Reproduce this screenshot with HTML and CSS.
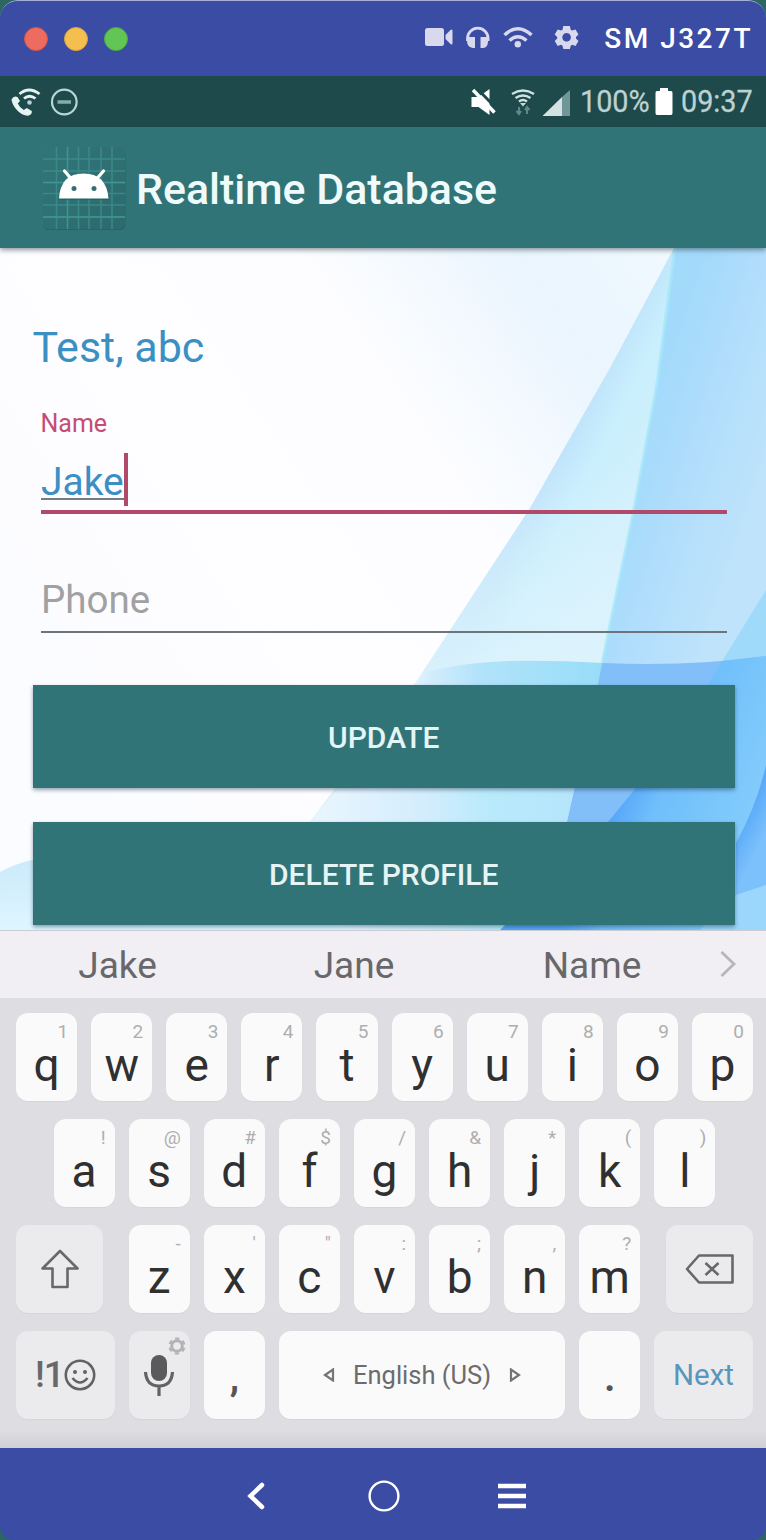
FILE: index.html
```html
<!DOCTYPE html>
<html lang="en">
<head>
<meta charset="utf-8">
<title>Realtime Database</title>
<link rel="stylesheet" href="styles.css">
</head>
<body>
<div class="window">
  <header class="titlebar">
    <div class="lights"><i class="light red"></i><i class="light yellow"></i><i class="light green"></i></div>
    <svg class="tools" width="160" height="30" viewBox="420 22 160 30">
      <g fill="#d8d9ec">
        <rect x="425" y="28" width="19" height="18" rx="2.5"/>
        <path d="M445.500 35L450.500 30Q452.500 28.500 452.500 31V43Q452.500 45.500 450.500 44L445.500 39Z"/>
        <path d="M480.500 37h7.500v4q0 7-5 7h-2.500zM475 48h-2q-6-1-6-7v-4h8z"/>
        <circle cx="517.800" cy="44.300" r="3.200"/>
        <path fill-rule="evenodd" d="M563.300 26h6.600l.8 3.700 1.500.9 3.300-1.200 3 5-2.500 2.500v1.600l2.500 2.500-3 5-3.300-1.200-1.500.9-.8 3.200h-6.600l-.8-3.200-1.500-.9-3.300 1.200-3-5 2.500-2.500v-1.600l-2.500-2.500 3-5 3.300 1.200 1.500-.9zM566.600 33a4.300 4.300 0 1 0 .01 0z"/>
      </g>
      <g fill="none" stroke="#d8d9ec" stroke-width="2.800">
        <path d="M467.500 41v-2.500a10.300 10.300 0 0 1 20.600 0v2.500"/>
        <path d="M504.500 35q13.300-12.500 27 0M509.500 40.500q8.300-7.500 17 0" stroke-width="3.500"/>
      </g>
    </svg>
    <span class="device">SM J327T</span>
  </header>

  <div class="status">
    <svg class="calls" width="80" height="34" viewBox="5 84 80 34">
      <path fill="#e6f3f3" d="M11.500 98.500q2-4 6-2.500l2.500 4-2.200 2.500q2 4.500 6 6.500l3-2 5 3q.5 3-3 4.500-5 1-11-4.500-5.800-6-6.300-11.500z"/>
      <g fill="none" stroke="#e6f3f3" stroke-width="2.800"><path d="M19.500 93q9.500-8 20 0M24 97.500q5.500-4.500 11.500 0"/></g>
      <circle cx="29.500" cy="101.500" r="2.300" fill="#b8d3d3"/>
      <circle cx="64.300" cy="101" r="12.300" fill="none" stroke="#b9d6d6" stroke-width="2.200"/>
      <path d="M57.500 101h13.500" stroke="#87acac" stroke-width="3.500"/>
    </svg>
    <div class="status-right">
      <svg width="104" height="34" viewBox="470 84 104 34">
        <path fill="#fff" d="M472.500 96h7l11-8v26l-11-8h-7z"/>
        <path d="M477 86.500l22 22.500" stroke="#1f4a4b" stroke-width="3"/>
        <path d="M474 89l21.500 22.500" stroke="#fff" stroke-width="3.500"/>
        <g fill="none" stroke="#cfe2e2" stroke-width="2.300"><path d="M513 93q11-7 22 0M516.500 97q7.500-5 15 0M520 100.500q4-3 8 0"/></g>
        <path fill="#c4dada" d="M521 102h6l-3 3.500z"/>
        <path d="M520 106v7m-2.500-3l2.500 3 2-3M528 113v-7m-2 3l2-3 2.500 3" stroke="#5f8889" fill="none" stroke-width="2"/>
        <path fill="#d4e3e2" d="M543.500 115L563 96v19z"/><path fill="#6f9798" d="M563 96l8-7v26h-8z"/>
      </svg>
      <span class="pct">100%</span>
      <svg class="battery" width="18" height="27" viewBox="0 0 18 27"><path fill="#fff" d="M5 0h8v3h3q1.500 0 1.500 2v20q0 2-1.500 2H2q-1.500 0-1.500-2V5q0-2 1.500-2h3z"/></svg>
      <span class="clock">09:37</span>
    </div>
  </div>

  <div class="appbar">
    <svg class="launcher" width="84" height="84" viewBox="42 146 84 84">
      <defs><linearGradient id="tile" x2="1" y2="1"><stop offset="0" stop-color="#317679"/><stop offset="1" stop-color="#2d6b6e"/></linearGradient></defs>
      <rect x="43.500" y="148.500" width="82" height="82" rx="6" fill="#235c5f" opacity=".6"/>
      <rect x="43" y="147" width="82" height="82" rx="6" fill="url(#tile)"/>
      <path d="M56.500 147v82M78.500 147v82M89 147v82M101 147v82M112 147v82M43 159h82M43 171h82M43 182.500h82M43 193.500h82M43 205h82M43 217h82" stroke="#3f9091" stroke-width="1.600" opacity=".75"/>
      <path d="M67.500 147v82M43 182.500h82M43 217h82" stroke="#409494" stroke-width="1.500"/>
      <path fill="#205457" opacity=".5" d="M59 200q1-25 25-25t25 25z"/>
      <path d="M64.500 171l7 8M103.500 171l-7 8" stroke="#fff" stroke-width="3.200" stroke-linecap="round"/>
      <path fill="#fff" d="M59 198.500q1.500-25 24.500-25t25 25z"/>
      <circle cx="74" cy="188.500" r="2.500" fill="#376d70"/><circle cx="94" cy="188.500" r="2.500" fill="#376d70"/>
    </svg>
    <h1>Realtime Database</h1>
  </div>

  <main class="content">
    <svg class="art" viewBox="0 248 766 682" preserveAspectRatio="none">
      <defs>
        <linearGradient id="base" x1="0" y1=".6" x2="1" y2="0"><stop offset="0" stop-color="#fbfcff"/><stop offset=".3" stop-color="#fefdff"/><stop offset=".55" stop-color="#fdfdff"/><stop offset=".76" stop-color="#eaf5fe"/><stop offset=".9" stop-color="#f0f9fe"/></linearGradient>
        <linearGradient id="fold" gradientUnits="userSpaceOnUse" x1="535" y1="500" x2="625" y2="545"><stop offset="0" stop-color="#bfe3fa"/><stop offset=".35" stop-color="#c9effd"/><stop offset="1" stop-color="#d3f0fc"/></linearGradient>
        <linearGradient id="fade" x2="0" y2="1"><stop offset=".3" stop-color="#dff4fd" stop-opacity="0"/><stop offset=".62" stop-color="#dff4fd" stop-opacity=".8"/></linearGradient>
        <linearGradient id="band" gradientUnits="userSpaceOnUse" x1="640" y1="440" x2="760" y2="480"><stop offset="0" stop-color="#a3dafb"/><stop offset=".5" stop-color="#b2defc"/><stop offset="1" stop-color="#bee3fb"/></linearGradient>
        <linearGradient id="wave" gradientUnits="userSpaceOnUse" x1="400" y1="0" x2="600" y2="0"><stop offset="0" stop-color="#f4f9fe"/><stop offset=".15" stop-color="#d3edfc"/><stop offset=".4" stop-color="#b1e3fa"/><stop offset="1" stop-color="#98ddf8"/></linearGradient>
        <linearGradient id="low" gradientUnits="userSpaceOnUse" x1="320" y1="0" x2="580" y2="0"><stop offset="0" stop-color="#e9f5fe"/><stop offset=".4" stop-color="#d3edfd"/><stop offset=".65" stop-color="#b9eafb"/><stop offset="1" stop-color="#b5e5fb"/></linearGradient>
        <linearGradient id="deep" gradientUnits="userSpaceOnUse" x1="620" y1="790" x2="740" y2="840"><stop offset="0" stop-color="#55a5fa"/><stop offset=".3" stop-color="#70bffb"/><stop offset="1" stop-color="#82cbfb"/></linearGradient>
        <linearGradient id="edge" gradientUnits="userSpaceOnUse" x1="738" y1="820" x2="766" y2="835"><stop offset="0" stop-color="#55a6f8"/><stop offset="1" stop-color="#7cc1fc"/></linearGradient>
        <linearGradient id="corner" x2=".2" y2="1"><stop offset="0" stop-color="#cbeafb"/><stop offset="1" stop-color="#dff6ff"/></linearGradient>
      </defs>
      <path fill="url(#base)" d="M0 248h766v682H0z"/>
      <path fill="url(#fold)" d="M674 248L610 368 530 508 415 684 310 822 250 930H545L567 822 598 684 635 505 657 385 675 248z"/>
      <path fill="url(#fade)" d="M674 248L610 368 530 508 415 684 310 822 250 930H545L567 822 598 684 635 505 657 385 675 248z"/>
      <path fill="url(#band)" d="M675 248H766V930H545L567 822 598 684 635 505 657 385z"/>
      <path d="M675 248L657 385 635 505 598 684" fill="none" stroke="#a2e5fa" stroke-width="3.500" opacity=".7"/>
      <path fill="#9fdafb" d="M766 590L708 684H766z"/>
      <path fill="url(#wave)" d="M415 684L422 673Q450 665 490 662T602 663L598 684V700H405z"/>
      <path fill="url(#low)" d="M337 789L400 700H594L567 822 545 930H250L310 822z"/>
      <path fill="#82bff9" d="M602 663Q690 667 766 656V930H545L567 822 598 684z"/>
      <path fill="url(#deep)" d="M722 661L766 656V930H500L608 822 635 789 708 684z"/>
      <path fill="url(#edge)" d="M766 765Q757 805 736 843V895L766 885z"/>
      <path fill="#9bd6fc" d="M736 895L766 885V930H700z"/>
      <path fill="url(#corner)" d="M0 872Q14 864 32 860L350 925V930H0z"/>
    </svg>
    <form class="form">
      <p class="greeting">Test, abc</p>
      <label class="floating">Name</label>
      <div class="field active"><span class="value">Jake</span><i class="caret"></i></div>
      <div class="field idle"><span>Phone</span></div>
      <button type="button" class="btn">UPDATE</button>
      <button type="button" class="btn">DELETE PROFILE</button>
    </form>
  </main>

  <div class="suggest">
    <span>Jake</span><span>Jane</span><span>Name</span>
    <svg width="20" height="28" viewBox="0 0 20 28"><path d="M3.500 1l12.500 12L3.500 25" fill="none" stroke="#b7b6b9" stroke-width="2.800"/></svg>
  </div>

  <div class="keyboard">
    <div class="row">
      <div class="key"><sup>1</sup>q</div><div class="key"><sup>2</sup>w</div><div class="key"><sup>3</sup>e</div><div class="key"><sup>4</sup>r</div><div class="key"><sup>5</sup>t</div><div class="key"><sup>6</sup>y</div><div class="key"><sup>7</sup>u</div><div class="key"><sup>8</sup>i</div><div class="key"><sup>9</sup>o</div><div class="key"><sup>0</sup>p</div>
    </div>
    <div class="row">
      <div class="key"><sup>!</sup>a</div><div class="key"><sup>@</sup>s</div><div class="key"><sup>#</sup>d</div><div class="key"><sup>$</sup>f</div><div class="key"><sup>/</sup>g</div><div class="key"><sup>&amp;</sup>h</div><div class="key"><sup>*</sup>j</div><div class="key"><sup>(</sup>k</div><div class="key"><sup>)</sup>l</div>
    </div>
    <div class="row spread">
      <div class="key fn side"><svg width="42" height="42" viewBox="0 0 42 42"><path d="M21 3L38.500 20.500H28.500V39H13.500V20.500H3.500z" fill="none" stroke="#68686a" stroke-width="2.600" stroke-linejoin="round"/></svg></div>
      <div class="letters"><div class="key"><sup>-</sup>z</div><div class="key"><sup>'</sup>x</div><div class="key"><sup>"</sup>c</div><div class="key"><sup>:</sup>v</div><div class="key"><sup>;</sup>b</div><div class="key"><sup>,</sup>n</div><div class="key"><sup>?</sup>m</div></div>
      <div class="key fn side"><svg width="50" height="32" viewBox="0 0 50 32"><path d="M2 16L14 2.500H47.500V29.500H14zM20.500 10l13 12M33.500 10L20.500 22" fill="none" stroke="#68686a" stroke-width="2.600" stroke-linejoin="round"/></svg></div>
    </div>
    <div class="row">
      <div class="key fn wide symbols"><span>!1</span><svg width="32" height="32" viewBox="0 0 32 32"><g fill="none" stroke="#626264" stroke-width="2.600"><circle cx="16" cy="16" r="14.200"/><path d="M8.500 19q7.500 9 15 0"/></g><circle cx="11" cy="13" r="2" fill="#626264"/><circle cx="21" cy="13" r="2" fill="#626264"/></svg></div>
      <div class="key fn mic">
        <svg width="60" height="88" viewBox="129 1331 60 88"><rect x="151" y="1355" width="16" height="26" rx="8" fill="#5a5a5b"/><path d="M145.500 1372q1 14 13.500 14t13.500-14M159 1386v10" fill="none" stroke="#626264" stroke-width="3.200"/><circle cx="177" cy="1346" r="5.300" fill="none" stroke="#b3b3b6" stroke-width="3"/><circle cx="177" cy="1346" r="7.500" fill="none" stroke="#b3b3b6" stroke-width="2.200" stroke-dasharray="4.200 3.654" stroke-dashoffset="-1.800"/></svg>
      </div>
      <div class="key mark">,</div>
      <div class="key space"><svg width="12" height="14" viewBox="0 0 12 14"><path d="M10 1.500v11L2 7z" fill="none" stroke="#747476" stroke-width="2.200"/></svg><span>English (US)</span><svg width="12" height="14" viewBox="0 0 12 14"><path d="M2 1.500v11L10 7z" fill="none" stroke="#747476" stroke-width="2.200"/></svg></div>
      <div class="key mark">.</div>
      <div class="key fn wide next">Next</div>
    </div>
  </div>

  <nav class="nav">
    <svg width="290" height="40" viewBox="240 1476 290 40" fill="none" stroke="#fff">
      <path d="M262 1485L250.500 1496l11.500 11" stroke-width="4.500" stroke-linecap="round"/>
      <circle cx="384" cy="1496" r="14.400" stroke-width="2.400"/>
      <path d="M498 1486h28M498 1496h28M498 1506h28" stroke-width="4.300"/>
    </svg>
  </nav>
</div>
</body>
</html>
```
FILE: styles.css
```css
* { box-sizing: border-box; }
body { margin: 0; background: #2c6764; font-family: Roboto, "Liberation Sans", sans-serif; }
.window { width: 766px; height: 1540px; border-radius: 18px 18px 14px 14px; overflow: hidden; display: flex; flex-direction: column; }

.titlebar { height: 76px; flex: none; background: #3b4ca5; border-top: 1.500px solid #a7afd8; border-radius: 18px 18px 0 0; display: flex; align-items: center; padding: 0 13px 0 24px; }
.lights { display: flex; gap: 16px; margin-right: auto; }
.light { width: 24px; height: 24px; border-radius: 50%; border: 1px solid; }
.red { background: #ed6b5f; border-color: #d35549; }
.yellow { background: #f5bf50; border-color: #d8a13c; }
.green { background: #62c655; border-color: #4faa3c; }
.tools { margin: 0 24px 3px 0; }
.device { color: #fff; font-size: 28px; font-weight: 500; letter-spacing: 2.500px; }

.status { height: 51px; flex: none; background: #1f4a4b; display: flex; align-items: center; justify-content: space-between; padding: 0 13px 0 5px; color: #bcd2d2; }
.status-right { display: flex; align-items: center; }
.pct, .clock { font-size: 32px; line-height: 55px; white-space: nowrap; transform: scaleX(.9); transform-origin: left; -webkit-text-stroke: .3px; }
.pct { width: 68px; margin: 0 7px; }
.battery { margin-right: 8px; }
.clock { width: 72px; }

.appbar { height: 121px; flex: none; background: #317478; display: flex; align-items: center; padding: 0 42px; position: relative; box-shadow: 0 2px 5px rgba(30, 50, 60, .5); z-index: 1; }
h1 { margin: 2px 0 0 10px; color: #effbfb; font-size: 42.900px; font-weight: 500; white-space: nowrap; }

.content { height: 682px; flex: none; position: relative; overflow: hidden; }
.art { position: absolute; inset: 0; width: 100%; height: 100%; }
.form { position: relative; padding: 71px 31px 0 32.500px; display: flex; flex-direction: column; }
.greeting { margin: 0; font-size: 43px; line-height: 56px; color: #3b90c3; }
.floating { margin: 33px 0 0 8px; font-size: 25px; line-height: 32px; color: #c54c75; }
.field { margin: 0 8px 0 8.500px; display: flex; font-size: 39px; }
.active { height: 74px; border-bottom: 4px solid #b14a69; padding-top: 13px; color: #3b8fc2; }
.value { height: 47px; line-height: 58px; border-bottom: 2px solid #747b82; }
.caret { width: 4px; height: 53px; background: #b14a69; }
.idle { height: 119px; padding-top: 60px; line-height: 52px; color: #a1a1a3; border-bottom: 2px solid #6d747b; }
.idle span { font-size: 38.500px; }
.btn { height: 103px; margin: 52px 0 0; border: 0; background: #317478; color: #e5f5f5; font: 500 30px/103px Roboto, sans-serif; box-shadow: 0 2px 4px rgba(20, 50, 70, .45); padding: 1px 0 0; }
.btn + .btn { margin-top: 34px; }

.suggest { height: 68px; flex: none; background: #f1eff4; border-top: 1.500px solid #c9cdd3; display: flex; align-items: center; color: #68686a; font-size: 37px; padding-right: 28px; }
.suggest span { width: 238px; text-align: center; padding-top: 2px; }
.suggest span:first-child { width: 235px; }
.suggest span:nth-child(3) { margin-right: 7px; }

.keyboard { height: 450px; flex: none; background: linear-gradient(#dedde2 96%, #d0cfd5); padding: 15px 13px 0 16px; display: flex; flex-direction: column; gap: 18px; }
.row, .letters { display: flex; justify-content: center; gap: 14px; }
.spread { justify-content: space-between; }
.key { width: 61.100px; height: 88px; flex: none; border-radius: 12px; background: #fafafa; box-shadow: 0 1px 1px rgba(0, 0, 0, .04); color: #303031; font-size: 46px; line-height: 104px; text-align: center; position: relative; }
.key sup { position: absolute; top: 10px; right: 9px; font-size: 19px; line-height: 18px; color: #aeaeb0; }
.fn { background: #ebebed; }
.side, .wide, .space, .mic { display: flex; align-items: center; justify-content: center; }
.side { width: 87px; }
.wide { width: 98.500px; }
.symbols { font-size: 37px; line-height: 90px; color: #68686a; font-weight: 500; }
.symbols span { letter-spacing: -1px; }
.mark { color: #555; font-size: 38px; font-weight: 700; line-height: 94px; }
.space { width: 286.300px; gap: 18px; font-size: 25.500px; line-height: 92px; color: #6c6c6e; }
.next { color: #5896bd; font-size: 29.500px; line-height: 90px; }

.nav { flex: 1; background: #3b4ca5; display: flex; align-items: center; padding: 4px 0 0 240px; }
```
